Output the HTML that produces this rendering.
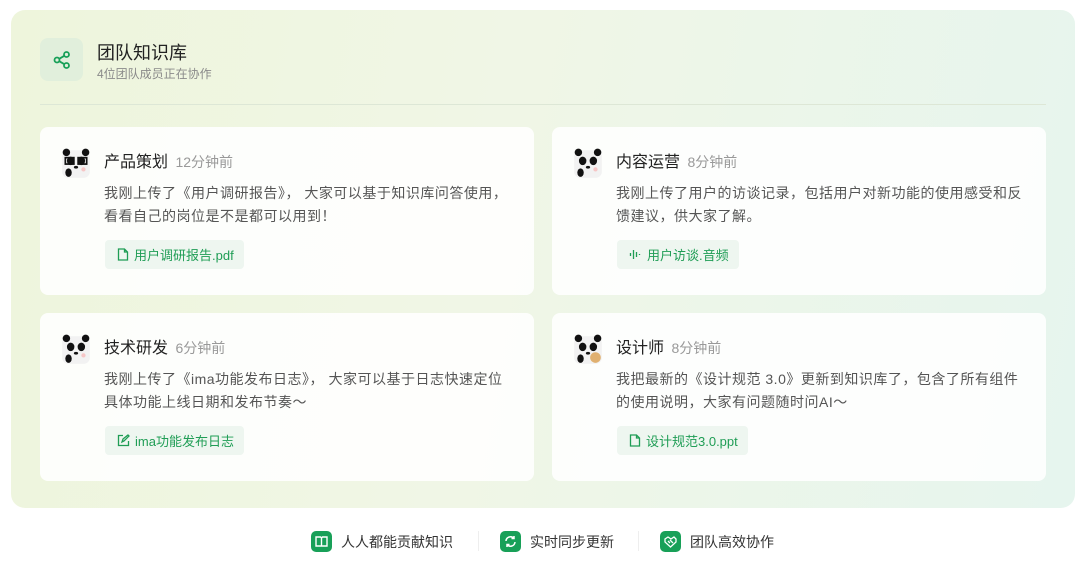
<!DOCTYPE html>
<html><head><meta charset="utf-8"><style>
*{margin:0;padding:0;box-sizing:border-box}
body{width:1080px;height:561px;background:#fff;font-family:"Liberation Sans","Noto Sans CJK SC",sans-serif;position:relative;overflow:hidden}
.panel{position:absolute;left:11px;top:10px;width:1064px;height:498px;border-radius:14px;background:linear-gradient(100deg,#eef5dc 0%,#f0f6e6 45%,#e6f5ee 100%)}
.hicon{position:absolute;left:40px;top:38px;width:43px;height:43px;border-radius:8px;background:#e1efdc;display:flex;align-items:center;justify-content:center}
.title{position:absolute;left:97px;top:39px;font-size:18px;color:#222}
.sub{position:absolute;left:97px;top:65px;font-size:12px;color:#8a8a8a}
.line{position:absolute;left:40px;top:104px;width:1006px;height:1px;background:#dde7d6}
.card{position:absolute;width:494px;height:168px;border-radius:8px;background:rgba(255,255,255,0.88)}
.av{position:absolute;left:20px;top:20px;width:32px;height:32px}
.name{position:absolute;left:64px;top:21px;font-size:16px;color:#222}
.name span{font-size:14px;color:#999;margin-left:3px}
.txt{position:absolute;left:64px;top:55px;white-space:nowrap;font-size:14px;line-height:23px;color:#555;letter-spacing:0.5px}
.chip{position:absolute;left:65px;top:113px;height:29px;padding:0 10px 0 12px;border-radius:4px;background:#eef6f0;color:#1f9d55;font-size:13px;display:flex;align-items:center;gap:5px}
.foot{position:absolute;top:531px;display:flex;align-items:center;font-size:14px;color:#333}
.fi{width:21px;height:21px;border-radius:5px;background:#18a058;margin-right:9px;display:flex;align-items:center;justify-content:center}
.sep{position:absolute;top:531px;width:1px;height:20px;background:#eee}
</style></head><body>
<div class="panel"></div>
<div class="hicon"><svg width="20" height="20" viewBox="0 0 20 20" fill="none" stroke="#18a058" stroke-width="1.8"><circle cx="14.5" cy="4.5" r="2.5"/><circle cx="5" cy="10" r="2.5"/><circle cx="14.5" cy="15.5" r="2.5"/><path d="M7.2 8.8l5.1-3M7.2 11.2l5.1 3"/></svg></div>
<div class="title">团队知识库</div>
<div class="sub">4位团队成员正在协作</div>
<div class="line"></div>

<svg width="0" height="0" style="position:absolute"><defs><g id="panda"><rect x="2" y="3" width="26" height="26" rx="6" fill="#f2f2f2"/><circle cx="6" cy="5" r="3.5" fill="#111"/><circle cx="24" cy="5" r="3.5" fill="#111"/><ellipse cx="10" cy="13" rx="3.5" ry="4" fill="#111"/><ellipse cx="20" cy="13" rx="3.5" ry="4" fill="#111"/><ellipse cx="15" cy="19" rx="2" ry="1.3" fill="#111"/><ellipse cx="8" cy="24" rx="3" ry="4" fill="#111"/><circle cx="22" cy="21" r="2" fill="#f6c6c6"/></g></defs></svg>

<div class="card" style="left:40px;top:127px">
<svg class="av" viewBox="0 0 30 30"><use href="#panda"/><rect x="5" y="10" width="8" height="6" fill="none" stroke="#111" stroke-width="1.6"/><rect x="17" y="10" width="8" height="6" fill="none" stroke="#111" stroke-width="1.6"/></svg>
<div class="name">产品策划 <span>12分钟前</span></div>
<div class="txt">我刚上传了《用户调研报告》， 大家可以基于知识库问答使用，<br>看看自己的岗位是不是都可以用到！</div>
<div class="chip"><svg width="12" height="13" viewBox="0 0 12 13" fill="none" stroke="#1f9d55" stroke-width="1.3"><path d="M1.5 1h6l3 3v8h-9z M7.5 1v3h3"/></svg>用户调研报告.pdf</div>
</div>

<div class="card" style="left:552px;top:127px">
<svg class="av" viewBox="0 0 30 30"><use href="#panda"/></svg>
<div class="name">内容运营 <span>8分钟前</span></div>
<div class="txt">我刚上传了用户的访谈记录，包括用户对新功能的使用感受和反<br>馈建议，供大家了解。</div>
<div class="chip"><svg width="13" height="13" viewBox="0 0 13 13" stroke="#1f9d55" stroke-width="1.3"><path d="M1.5 5v3M4.5 2v9M7.5 4v5M10.5 6v1"/></svg>用户访谈.音频</div>
</div>

<div class="card" style="left:40px;top:313px">
<svg class="av" viewBox="0 0 30 30"><use href="#panda"/></svg>
<div class="name">技术研发 <span>6分钟前</span></div>
<div class="txt">我刚上传了《ima功能发布日志》， 大家可以基于日志快速定位<br>具体功能上线日期和发布节奏～</div>
<div class="chip"><svg width="13" height="13" viewBox="0 0 13 13" fill="none" stroke="#1f9d55" stroke-width="1.3"><path d="M6 1.5H1.5v10h10V7M5 8l1-3 5-4 1 1-5 5z"/></svg>ima功能发布日志</div>
</div>

<div class="card" style="left:552px;top:313px">
<svg class="av" viewBox="0 0 30 30"><use href="#panda"/><circle cx="22" cy="23" r="5" fill="#e0b070"/></svg>
<div class="name">设计师 <span>8分钟前</span></div>
<div class="txt">我把最新的《设计规范 3.0》更新到知识库了，包含了所有组件<br>的使用说明，大家有问题随时问AI～</div>
<div class="chip"><svg width="12" height="13" viewBox="0 0 12 13" fill="none" stroke="#1f9d55" stroke-width="1.3"><path d="M1.5 1h6l3 3v8h-9z M7.5 1v3h3"/></svg>设计规范3.0.ppt</div>
</div>

<div class="foot" style="left:311px"><div class="fi"><svg width="13" height="11" viewBox="0 0 13 11" fill="none" stroke="#fff" stroke-width="1.4"><path d="M1 1h4.5l1 1 1-1H12v9H1zM6.5 2v8"/></svg></div>人人都能贡献知识</div>
<div class="sep" style="left:478px"></div>
<div class="foot" style="left:500px"><div class="fi"><svg width="13" height="13" viewBox="0 0 13 13" fill="none" stroke="#fff" stroke-width="1.5"><path d="M2 6a4.5 4.5 0 0 1 8-2.5M11 7a4.5 4.5 0 0 1-8 2.5M10 1v2.5H7.5M3 12V9.5h2.5"/></svg></div>实时同步更新</div>
<div class="sep" style="left:638px"></div>
<div class="foot" style="left:660px"><div class="fi"><svg width="13" height="12" viewBox="0 0 13 12" fill="none" stroke="#fff" stroke-width="1.3"><path d="M1 3l3-2 3 2 3-2 2 2v3l-5.5 5L1 6z M4 5l2 2 M6 4l3 3"/></svg></div>团队高效协作</div>
</body></html>
